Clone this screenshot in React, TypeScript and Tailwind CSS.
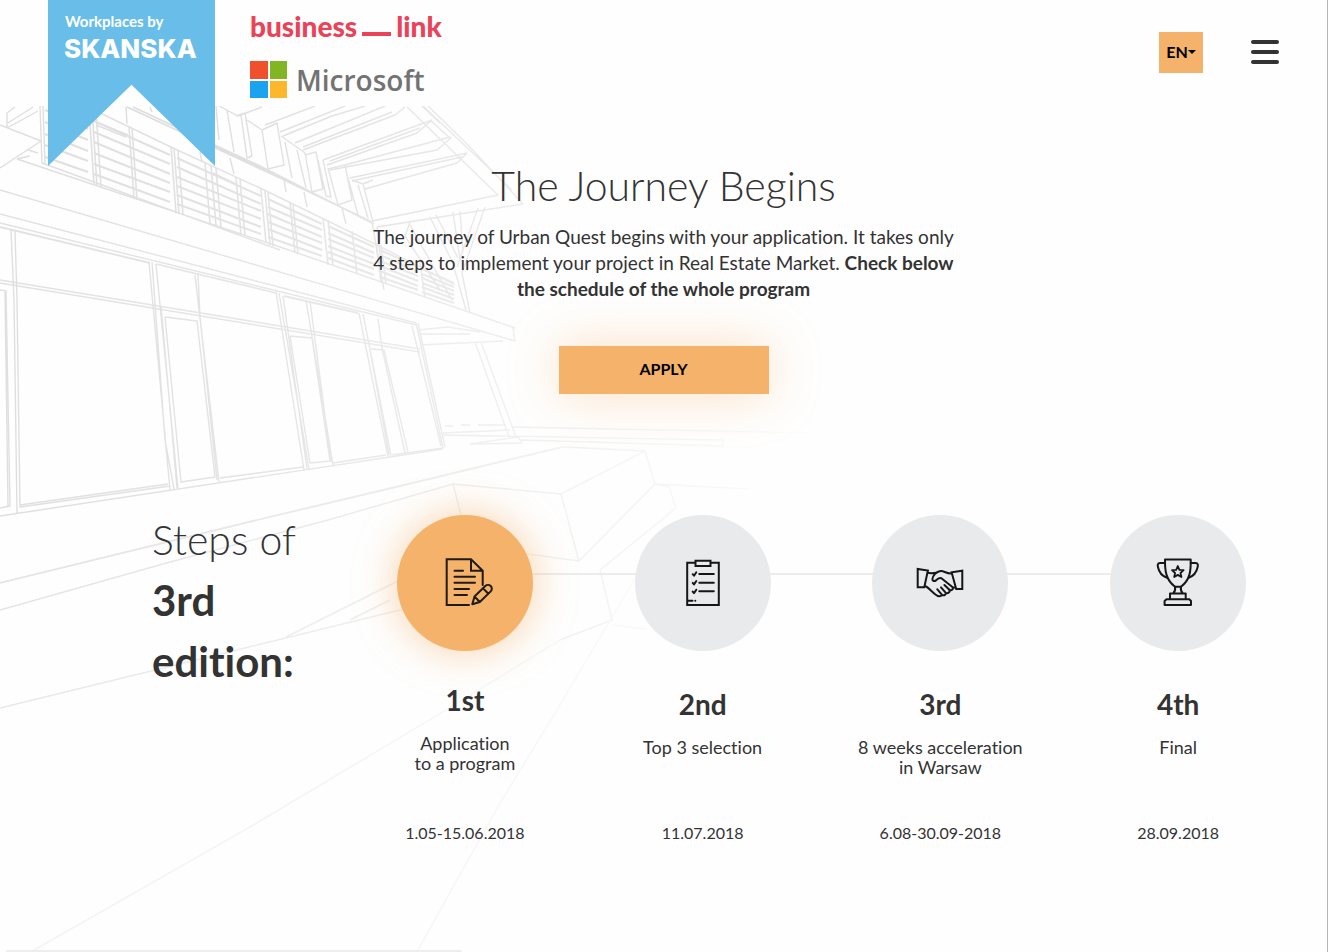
import type { ReactNode } from "react";

const railTop = (x: number) => 66 + x * 0.47;
const railBottom = (x: number) => 153 + x * 0.34;

const louverPanels: [number, number][] = [
  [45, 88],
  [94, 170],
  [177, 261],
  [268, 322],
  [328, 374],
  [380, 418],
  [422, 454],
];

const louverPath = louverPanels
  .map(([a, b]) =>
    [1, 2, 3, 4, 5, 6]
      .map((i) => {
        const t = i / 7;
        const y = (x: number) => Math.round(railTop(x) + (railBottom(x) - railTop(x)) * t);
        return `M${a} ${y(a)}L${b} ${y(b)}`;
      })
      .join("")
  )
  .join("");

const louverPosts = [89, 92, 96, 129, 132, 171, 174, 178, 205, 211, 216, 236, 240, 261, 265, 268, 290, 293, 323, 328, 352, 376, 381, 420]
  .map((x) => `M${x} ${Math.round(railTop(x))}L${x + 5} ${Math.round(railBottom(x + 5))}`)
  .join("");

function Building() {
  return (
    <svg
      aria-hidden="true"
      className="pointer-events-none absolute left-0 top-[106px] -z-10 h-[846px] w-[830px]"
      viewBox="0 106 830 846"
      fill="none"
      strokeWidth="1.4"
      strokeLinejoin="round"
    >
      <defs>
        <linearGradient id="fadeX" x1="0" x2="830" y1="0" y2="0" gradientUnits="userSpaceOnUse">
          <stop offset="0" stopColor="#fff" />
          <stop offset="0.3" stopColor="#fff" stopOpacity="0.85" />
          <stop offset="0.6" stopColor="#fff" stopOpacity="0.55" />
          <stop offset="0.85" stopColor="#fff" stopOpacity="0.25" />
          <stop offset="1" stopColor="#fff" stopOpacity="0" />
        </linearGradient>
        <mask id="fade" maskUnits="userSpaceOnUse" x="0" y="106" width="830" height="846">
          <rect x="0" y="106" width="830" height="846" fill="url(#fadeX)" />
        </mask>
      </defs>
      <g mask="url(#fade)">
        {/* louvred balcony */}
        <g stroke="#dedede">
          <path d={louverPath} strokeWidth="2" />
          <path d={louverPosts} strokeWidth="1.6" />
          <path d="M100 113L173 148L260 188L377 245L455 285M17 159L280 247L515 328M42 163L280 250" />
          <path d="M40 106L42 163M43 106L45 164M0 125L41 141L0 168M7 128V113L15 107M7 128L38 111M8 123L33 107M28 150L38 153M17 159L30 156" />
          <path d="M96 125L126 137M96 122L128 135M213 173L236 184" />
        </g>
        {/* roof edge and boards */}
        <g stroke="#dadada">
          <path d="M127 107L280 178L372 222M133 107L260 166L374 224M215 146L280 176" strokeWidth="1.8" />
          <path d="M126 107L127 124M150 107L152 112M200 152L202 162M230 158L234 174M284 180L286 192M304 192L307 207M342 208L346 224" />
          <path d="M216 106L219 140M227 110L234 152M241 115L247 158L252 156L245 113L236 116M219 106L238 116L262 107M247 120L262 130L268 169L284 165L277 123L262 130" />
          <path d="M281 136L305 153L312 192L323 189L316 152L305 155M285 142L292 178M297 150L306 188M318 160L326 196L331 197L323 160M328 168L338 205L352 200L345 165L328 169M348 178L358 215M352 180L363 184L373 222M358 185L368 218M363 184L373 180" />
          <path d="M265 125L315 106M280 132L345 106M283 136L332 116L365 106M295 143L385 106M303 150L395 115L405 107M303 147L392 112M323 160L432 120M327 165L417 133L432 120M330 161L420 128M345 165L450 137M330 170L437 150L452 137M350 178L467 153M365 189L457 163L467 153M352 181L462 157" />
          <path d="M407 107L498 195L372 221M423 106L512 190M428 106L468 145L523 204L377 227M422 106L440 123M430 120L450 138" />
          <path d="M430 217L453 263M436 215L458 258M453 212L460 260M460 211L463 252M478 208L457 267M485 207L462 273L470 313M410 222L405 236L440 290M372 222L384 290M377 227L380 255M452 260L466 310M410 225L452 300" />
        </g>
        {/* façade beams */}
        <g stroke="#e1e1e1">
          <path d="M0 190L515 341L513 328M0 214L416 323M0 223L416 325M0 280L420 349M0 283L420 352" />
          <path d="M0 227L150 263M156 264L276 293M284 296L358 313" strokeWidth="1.8" />
        </g>
        {/* window frames */}
        <g stroke="#dfdfdf">
          <path d="M11 230L14 300L17 513M15 231L17 300L20 507L170 486M0 290L6 291L10 506L0 508M5 292L8 506M0 516L443 449M20 505L168 484" />
          <path d="M149 262L170 490M152 262L165 440L174 489M156 264L178 489M161 306L177 488M165 317L181 482L215 477L197 321L165 317" />
          <path d="M195 275L219 482M198 275L200 317L217 480M220 478L303 467M276 292L304 470M279 293L309 469M283 296L307 469" />
          <path d="M290 336L310 463L330 461L312 338L290 336M306 300L333 465M310 301L331 462M333 463L386 455" />
          <path d="M359 313L388 457M363 314L391 456M370 350L389 455M378 319L382 348L405 453M371 349L384 350L408 452M416 323L443 448L392 455M412 326L441 446M418 323L445 447" />
        </g>
        {/* terrace and street */}
        <g stroke="#e4e4e4">
          <path d="M0 583L257 520L400 486L562 447" strokeWidth="1.8" />
          <path d="M0 610L170 562L328 520L453 484L561 494L645 451L562 447M453 484L461 515M561 494L579 561L655 484L645 451M655 484L748 489M579 561L520 553M655 484L669 487L676 508L600 570L612 620L560 640" />
          <path d="M442 435L723 440V446L521 440M513 427L813 433M442 433L510 430M445 426H453M461 425H470M478 425H506M470 444L518 437L522 443L470 444" />
          <path d="M420 345L503 341M418 330L448 327L480 332M419 334L470 334M475 342L509 437M481 342L516 437" />
        </g>
        <g stroke="#e8e8e8">
          <path d="M0 708L400 610L470 590M286 637L396 582L470 545M350 620L390 600" />
        </g>
        <g stroke="#f0f0f0">
          <path d="M34 950L250 827L446 710L560 640M418 950L500 803L557 710L640 570M612 625L646 629" />
        </g>
      </g>
    </svg>
  );
}

function SkanskaRibbon() {
  return (
    <a
      href="#skanska"
      className="flex h-[166px] w-[167px] flex-col bg-[#69bde9] pl-4 pt-[11px] text-white [clip-path:polygon(0_0,100%_0,100%_100%,50%_51%,0_100%)]"
    >
      <span className="pl-px text-[15px] font-bold leading-[20px]">Workplaces by</span>
      <span className="font-['Inter',sans-serif] text-[26px] font-extrabold leading-[36px]">SKANSKA</span>
    </a>
  );
}

function PartnerLogos() {
  return (
    <div className="flex flex-col gap-5 pl-[35px] pt-[11px]">
      <a href="#business-link" className="flex items-center gap-[5px] text-[28px] font-black leading-[30px] text-[#ea4358]">
        <span>business</span>
        <span className="mt-4 h-1 w-[29px] bg-[#ea4358]" />
        <span>link</span>
      </a>
      <a href="#microsoft" className="flex items-center gap-[9px] font-['Open_Sans',sans-serif] text-[28px] font-semibold leading-[36px] text-[#737373]">
        <span className="grid size-[37px] grid-cols-2 gap-0.5">
          <span className="bg-[#f1502f]" />
          <span className="bg-[#80b622]" />
          <span className="bg-[#1ba3ef]" />
          <span className="bg-[#fdb72a]" />
        </span>
        Microsoft
      </a>
    </div>
  );
}

function Icon({ viewBox = "0 1 48 48", children }: { viewBox?: string; children: ReactNode }) {
  return (
    <svg
      aria-hidden="true"
      className="size-12 overflow-visible"
      viewBox={viewBox}
      fill="none"
      stroke="currentColor"
      strokeWidth="2"
      strokeLinecap="round"
      strokeLinejoin="round"
    >
      {children}
    </svg>
  );
}

const documentIcon = (
  <Icon viewBox="-4 1 48 48">
    <path d="M24 47H1.7V1.3H26L37.7 12.7V27M26 1.3V12.7H37.7" strokeLinejoin="miter" />
    <path d="M9.5 12.7H18M9.5 18.7H30M9.5 24.7H30M9.5 31H24M9.5 37H22" />
    <path d="M27.3 46.3L29.5 38.5L40.3 28a3.8 3.8 0 0 1 5.4 5.4L34.8 44ZM38 30.3L43.4 35.7M29.5 38.5L34.8 44" />
  </Icon>
);

const checklistIcon = (
  <Icon>
    <path d="M16.5 4.7H8.2V47H39.8V4.7H31.5M16.5 2.7H31.5V8H16.5Z" strokeLinejoin="miter" />
    <path d="M20.3 16H34.8M20.3 24.7H34.8M20.3 33.3H34.8M9 42.7H13.5M16.3 42.7V42.8" />
    <path d="M13.7 16.2L15 17.7L17.3 14.3M13.7 24.9L15 26.4L17.3 23M13.7 33.6L15 35.1L17.3 31.7" />
  </Icon>
);

const handshakeIcon = (
  <Icon>
    <path d="M1.7 11V29.3H8.3L11.9 12.5ZM46.3 12.7V31H40.2L35.6 14.3Z" strokeLinejoin="miter" />
    <path d="M11.7 14.7C14.5 15.6 17 15 20 14.8M35.8 15.3C31.5 16.5 28.5 12.8 24.6 13C20 13.6 16.6 18 16.4 21C16.4 23.2 18.4 23.6 20 22.4C21.6 20.6 23.2 19.8 25.4 20.2L36.4 29C37.6 31 35.8 33 33.6 31.8M39 29.4L36.8 29.6" />
    <path d="M9.5 28.3C12.5 29.4 16.5 34.5 20.5 37.3C22.5 38.8 25.4 38.6 26 36.8L21.2 31.2M26 37C28.4 38 30.2 36.6 29.6 34.6L25 29.4M29.8 35C32.2 35.6 34.2 34 33.4 31.8L28.4 27" />
  </Icon>
);

const trophyIcon = (
  <Icon>
    <path d="M11 1.5H36.7C37 13 36 22 27 28.7H21C12 22 10.8 13 11 1.5Z" />
    <path d="M11 5H6C3.6 5 3.4 7 4 9.3C5 14 7.6 18 13 19.7M36.7 5H41.6C44 5 44.2 7 43.6 9.3C42.6 14 40 18 34.7 19.7" />
    <path d="M21 28.7C21.5 31.5 21 33.5 19.3 35.3M27 28.7C26.5 31.5 27 33.5 28.7 35.3M16 35.5H31.7V41.3H16ZM12.5 41.3H35.3L37 43V47H10.6V43Z" />
    <path d="M23.8 8L25.4 11.8L29.6 12.2L26.5 15L27.4 19L23.8 16.9L20.2 19L21.1 15L18 12.2L22.2 11.8Z" strokeWidth="1.8" />
  </Icon>
);

type Step = { rank: string; lines: string[]; date: string; icon: ReactNode; active?: boolean };

const steps: Step[] = [
  { rank: "1st", lines: ["Application", "to a program"], date: "1.05-15.06.2018", icon: documentIcon, active: true },
  { rank: "2nd", lines: ["Top 3 selection"], date: "11.07.2018", icon: checklistIcon },
  { rank: "3rd", lines: ["8 weeks acceleration", "in Warsaw"], date: "6.08-30.09-2018", icon: handshakeIcon },
  { rank: "4th", lines: ["Final"], date: "28.09.2018", icon: trophyIcon },
];

function StepItem({ step }: { step: Step }) {
  return (
    <li className="flex flex-col items-center text-center">
      <div
        className={
          step.active
            ? "flex size-[136px] items-center justify-center rounded-full bg-[#f4b26a] text-[#1f1a14] shadow-[0_0_40px_rgba(244,178,106,0.6)]"
            : "flex size-[136px] items-center justify-center rounded-full bg-[#e9eaec] text-[#161616]"
        }
      >
        {step.icon}
      </div>
      <h3 className={step.active ? "mt-8 text-[28px] font-bold leading-[34px]" : "mt-9 text-[28px] font-bold leading-[34px]"}>
        {step.rank}
      </h3>
      <p className="mb-11 mt-4 text-[18px] leading-[20px]">
        {step.lines.map((line) => (
          <span key={line} className="block">
            {line}
          </span>
        ))}
      </p>
      <p className="mt-auto text-[16px] leading-[20px]">{step.date}</p>
    </li>
  );
}

export default function App() {
  return (
    <div className="relative isolate flex min-h-screen flex-col overflow-hidden border-r border-[#b4b4b4] bg-[#fefefe] font-['Lato',sans-serif] text-[#333] [font-variant-ligatures:none]">
      <Building />
      <header className="flex items-start pl-12 pr-12">
        <SkanskaRibbon />
        <PartnerLogos />
        <div className="ml-auto flex items-center gap-12 pt-8">
          <button type="button" className="flex h-[41px] w-11 items-center justify-center bg-[#f4b26a] pb-0.5 text-[16px] font-bold text-black">
            EN
            <span className="border-x-4 border-t-4 border-x-transparent border-t-black" />
          </button>
          <button type="button" aria-label="Menu" className="flex w-7 flex-col gap-1.5 pb-0.5">
            <span className="h-1 rounded-xs bg-[#333]" />
            <span className="h-1 rounded-xs bg-[#333]" />
            <span className="h-1 rounded-xs bg-[#333]" />
          </button>
        </div>
      </header>
      <main className="flex grow flex-col">
        <section className="flex flex-col items-center text-center">
          <h1 className="text-[41px] font-light leading-[40px]">The Journey Begins</h1>
          <p className="mt-[18px] text-[19px] leading-[26px]">
            The journey of Urban Quest begins with your application. It takes only
            <br />4 steps to implement your project in Real Estate Market. <b>Check below</b>
            <br />
            <b>the schedule of the whole program</b>
          </p>
          <button type="button" className="mt-11 h-12 w-[210px] bg-[#f4b26a] pb-0.5 text-[16px] font-bold text-black shadow-[0_0_50px_rgba(244,178,106,0.4)]">
            APPLY
          </button>
        </section>
        <section className="mt-[115px] flex items-start pl-[152px] pr-[30px]">
          <h2 className="w-[194px] shrink-0 text-[42px] leading-[61px]">
            <span className="block text-[41px] font-light">Steps of</span>
            <b className="block">3rd</b>
            <b className="block">edition:</b>
          </h2>
          <div className="relative grow pt-1.5">
            <div className="absolute inset-x-[12.5%] top-16 -z-10 h-0.5 bg-[#ececec]" />
            <ol className="grid h-[334px] grid-cols-4 pb-1.5">
              {steps.map((step) => (
                <StepItem key={step.rank} step={step} />
              ))}
            </ol>
          </div>
        </section>
        <div className="ml-1.5 mt-auto h-0.5 w-[456px] rounded-t-sm bg-[#ededed]" />
      </main>
    </div>
  );
}
